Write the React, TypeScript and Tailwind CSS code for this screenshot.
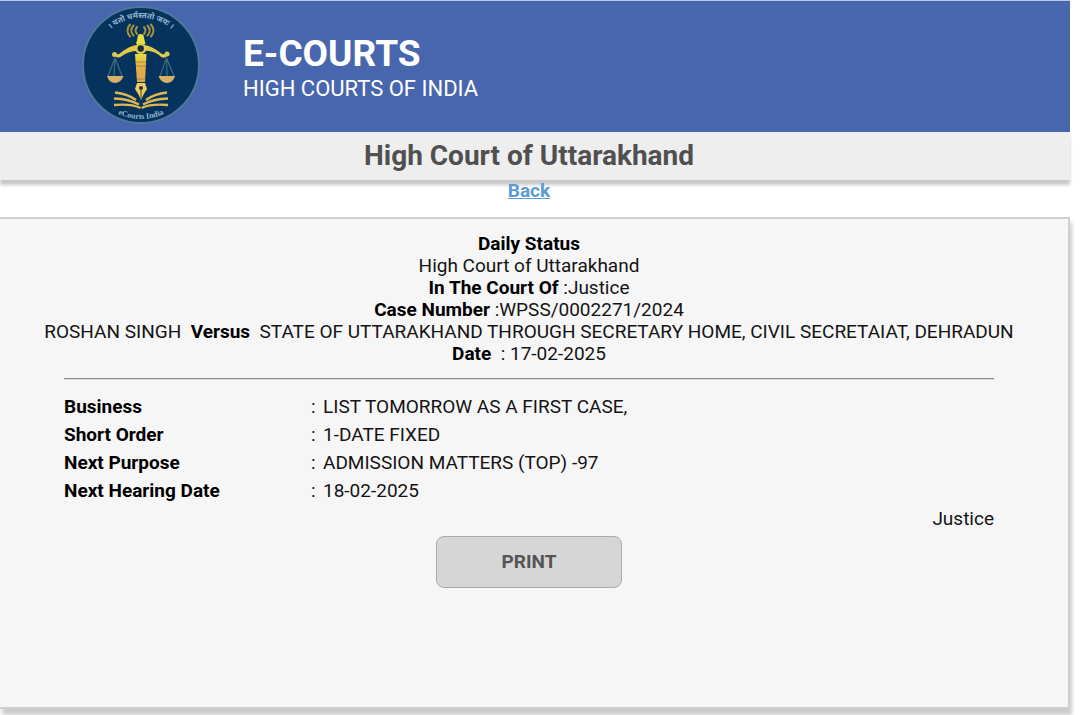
import React from 'react';

const details = [
  { label: 'Business', value: 'LIST TOMORROW AS A FIRST CASE,' },
  { label: 'Short Order', value: '1-DATE FIXED' },
  { label: 'Next Purpose', value: 'ADMISSION MATTERS (TOP) -97' },
  { label: 'Next Hearing Date', value: '18-02-2025' },
];

function Emblem() {
  return (
    <svg width="120" height="120" viewBox="0 0 120 120" role="img" aria-label="eCourts India" className="shrink-0">
      <defs>
        <path id="arc-top" d="M13 60 A47 47 0 0 1 107 60" />
        <path id="arc-bottom" d="M6 60 A54 54 0 0 0 114 60" />
        <linearGradient id="gold" x1="0" y1="0" x2="0" y2="1">
          <stop offset="0" stopColor="#e3e043" />
          <stop offset="0.5" stopColor="#e3ad4a" />
          <stop offset="1" stopColor="#dfa653" />
        </linearGradient>
      </defs>
      <circle cx="60" cy="60" r="58" fill="#05335d" stroke="#4d7899" strokeWidth="2" />
      <g fill="#94b5cf" fontSize="8" fontWeight="700" textAnchor="middle" fontFamily="Roboto, 'Noto Sans Devanagari', sans-serif">
        <text>
          <textPath href="#arc-top" startOffset="50%">। यतो धर्मस्ततो जयः ।</textPath>
        </text>
        <text fontFamily="'Liberation Serif', serif">
          <textPath href="#arc-bottom" startOffset="50%">eCourts India</textPath>
        </text>
      </g>

      {/* signal waves */}
      <g fill="none" stroke="#a8933c" strokeWidth="2" strokeLinecap="round">
        <path d="M56 22 q-3 3.500 0 7 M52.500 20.500 q-4.500 5 0 10 M49 19.500 q-5 6 0 12" />
        <path d="M63 22 q3 3.500 0 7 M66.500 20.500 q4.500 5 0 10 M70 19.500 q5 6 0 12" />
      </g>

      {/* beam */}
      <path
        d="M34 51 Q31 47 34 48 Q36 50 38 49 Q49 40 57 40 L62 40 Q70 40 81 49 Q84 50 86 47 Q88 50 85 52 Q81 54 78 50 Q70 45 63 46 L56 46 Q48 46 41 51 Q37 54 34 51 Z"
        fill="#e2ca48"
      />
      <circle cx="33.500" cy="49.500" r="2.500" fill="#d8c75d" />
      <circle cx="86" cy="49" r="2.500" fill="#d8c75d" />

      {/* pen */}
      <path d="M59.500 29 Q63 29 63 33 L64.500 39 H55 L56.500 33 Q56.500 29 59.500 29 Z" fill="#e6e045" />
      <circle cx="59.700" cy="43.500" r="5.500" fill="#e6cd45" />
      <circle cx="59.700" cy="43.500" r="3.200" fill="#152d40" />
      <path d="M54 49 H65.500 L64 77 H56 Z" fill="url(#gold)" />
      <path d="M54.500 57 H65 M55 61 H64.500 M56 74 H64" stroke="#a47f36" strokeWidth="0.900" />
      <path d="M56 78 H64 L66 84 Q63 88 60 95 Q57 88 54 84 Z" fill="#edce5c" />
      <circle cx="60" cy="83" r="2" fill="#352f39" />
      <path d="M60 84 V94" stroke="#4d422f" strokeWidth="1" />

      {/* pans */}
      <g fill="none" stroke="#3c6d7c" strokeWidth="1.200">
        <path d="M34 53 L27 71 M34 53 L33 71 M34 53 L41 71" />
        <path d="M85.500 53 L79 71 M85.500 53 L86 71 M85.500 53 L93 71" />
      </g>
      <path d="M26 71 H42.500 Q40 78 34 78 Q28 78 26 71 Z" fill="#d8b066" />
      <path d="M77.500 71 H94 Q92 78 86 78 Q80 78 77.500 71 Z" fill="#d8b066" />

      {/* book */}
      <g fill="none" stroke="#dfb752" strokeWidth="2.400">
        <path d="M34 87.500 Q47 89 55 95" />
        <path d="M33 93.500 Q48 94 58 99.500" />
        <path d="M33 100 Q50 98.500 59.500 103" />
        <path d="M86 87.500 Q73 89 65 95" />
        <path d="M87 93.500 Q72 94 62 99.500" />
        <path d="M87 100 Q70 98.500 60.500 103" />
      </g>
    </svg>
  );
}

export default function App() {
  const handlePrint = () => {
    window.print();
  };

  return (
    <div className="min-h-screen bg-white pr-[10px] font-[Roboto,'Liberation_Sans',sans-serif] text-[19px] leading-[22px] text-[#141414]">
      <header className="flex h-[132px] items-start gap-[42px] border-t border-[#b5cae6] bg-[#4866ad] pl-[81px] pt-1 text-white">
        <Emblem />
        <div className="pt-7">
          <h1 className="text-[37px] font-bold leading-[42px]">E-COURTS</h1>
          <p className="text-[22px] leading-[28px]">HIGH COURTS OF INDIA</p>
        </div>
      </header>

      <div className="bg-[#eeeeee] py-1 pr-3 shadow-[0_5px_3px_#c8c8c8]">
        <h2 className="text-center text-[28px] font-bold leading-[40px] text-[#505050]">
          High Court of Uttarakhand
        </h2>
      </div>

      <nav className="relative pr-3 text-center">
        <a href="#back" className="font-bold text-[#5b9bd1] underline">
          Back
        </a>
      </nav>

      <main className="mt-[15px] min-h-[492px] border-y-2 border-r-2 border-[#d0d0d0] bg-[#f6f6f6] pr-[10px] pt-[14px] shadow-[2px_6px_4px_#cccccc]">
        <div className="text-center">
          <p className="font-bold text-black">Daily Status</p>
          <p>High Court of Uttarakhand</p>
          <p>
            <b className="text-black">In The Court Of</b> :Justice
          </p>
          <p>
            <b className="text-black">Case Number</b> :WPSS/0002271/2024
          </p>
          <p>
            ROSHAN SINGH&nbsp; <b className="text-black">Versus</b>&nbsp; STATE OF UTTARAKHAND THROUGH SECRETARY HOME, CIVIL SECRETAIAT, DEHRADUN
          </p>
          <p>
            <b className="text-black">Date</b>&nbsp; : 17-02-2025
          </p>
        </div>

        <div className="px-16">
          <hr className="mb-[13px] mt-[13px] border-b border-t border-b-[#d8d8d8] border-t-[#8c8c8c]" />
          <table className="w-full text-left">
            <tbody>
              {details.map(({ label, value }) => (
                <tr key={label} className="h-7">
                  <th scope="row" className="w-[247px] p-0 font-bold text-black">{label}</th>
                  <td className="w-3 p-0">:</td>
                  <td className="p-0">{value}</td>
                </tr>
              ))}
            </tbody>
          </table>
          <p className="text-right leading-7">Justice</p>
        </div>

        <div className="mt-[3px] flex justify-center">
          <button
            type="button"
            onClick={handlePrint}
            className="h-[52px] w-[186px] rounded-lg border border-[#aaaaaa] bg-[#d6d6d6] font-bold text-[#555555]"
          >
            PRINT
          </button>
        </div>
      </main>
    </div>
  );
}
